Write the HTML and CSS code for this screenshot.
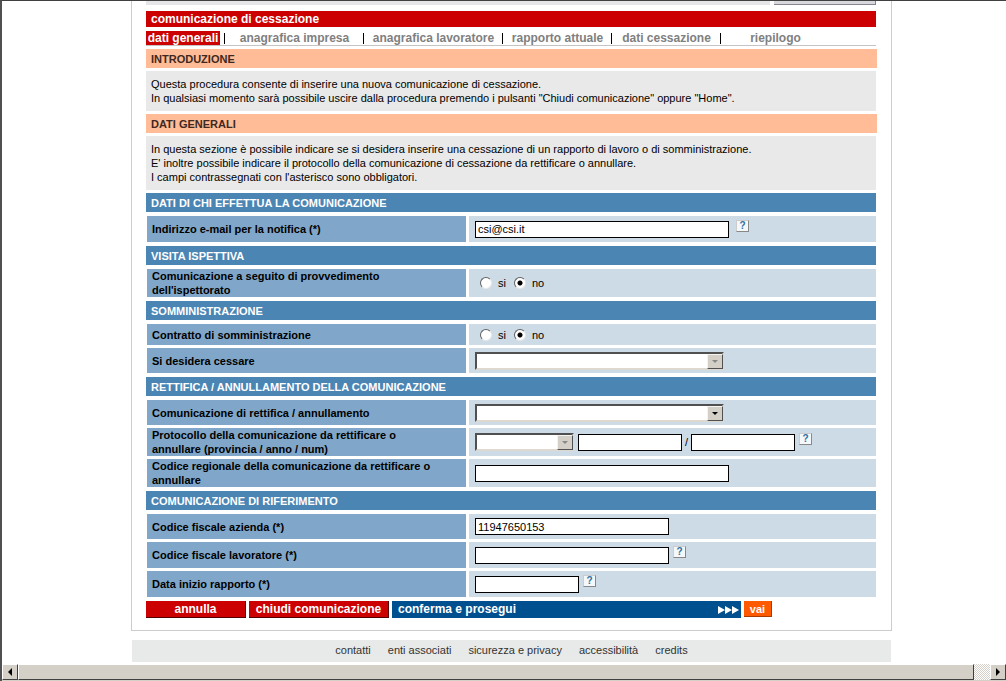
FILE: index.html
```html
<!DOCTYPE html>
<html lang="it">
<head>
<meta charset="utf-8">
<title>Comunicazione di cessazione</title>
<link rel="stylesheet" href="styles.css">
</head>
<body>
<div class="viewport">
  <main class="panel">
    <div class="top-strip"><span class="strip-bar"></span><span class="strip-button"></span></div>
    <h1 class="title">comunicazione di cessazione</h1>
    <nav class="tabs">
      <a class="tab tab-active" href="#">dati generali</a>
      <a class="tab tab-impresa" href="#">anagrafica impresa</a>
      <a class="tab tab-lavoratore" href="#">anagrafica lavoratore</a>
      <a class="tab tab-rapporto" href="#">rapporto attuale</a>
      <a class="tab tab-cessazione" href="#">dati cessazione</a>
      <a class="tab tab-riepilogo" href="#">riepilogo</a>
    </nav>
    <h2 class="heading heading-peach">INTRODUZIONE</h2>
    <p class="intro">Questa procedura consente di inserire una nuova comunicazione di cessazione.<br>In qualsiasi momento sarà possibile uscire dalla procedura premendo i pulsanti "Chiudi comunicazione" oppure "Home".</p>
    <h2 class="heading heading-peach">DATI GENERALI</h2>
    <p class="intro">In questa sezione è possibile indicare se si desidera inserire una cessazione di un rapporto di lavoro o di somministrazione.<br>E' inoltre possibile indicare il protocollo della comunicazione di cessazione da rettificare o annullare.<br>I campi contrassegnati con l'asterisco sono obbligatori.</p>

    <form class="form">
      <h2 class="heading heading-blue">DATI DI CHI EFFETTUA LA COMUNICAZIONE</h2>
      <div class="rows">
        <div class="row row-tall">
          <label class="label" for="email">Indirizzo e-mail per la notifica (*)</label>
          <div class="value"><input class="text text-long" id="email" type="text" value="csi@csi.it"><button class="help help-far" type="button">?</button></div>
        </div>
      </div>

      <h2 class="heading heading-blue">VISITA ISPETTIVA</h2>
      <div class="rows">
        <div class="row">
          <div class="label" id="lab-isp">Comunicazione a seguito di provvedimento dell'ispettorato</div>
          <div class="value radios" role="radiogroup" aria-labelledby="lab-isp">
            <label class="option"><input class="radio" type="radio" name="isp">si</label>
            <label class="option"><input class="radio" type="radio" name="isp" checked>no</label>
          </div>
        </div>
      </div>

      <h2 class="heading heading-blue">SOMMINISTRAZIONE</h2>
      <div class="rows">
        <div class="row row-short">
          <div class="label" id="lab-som">Contratto di somministrazione</div>
          <div class="value radios" role="radiogroup" aria-labelledby="lab-som">
            <label class="option"><input class="radio" type="radio" name="som">si</label>
            <label class="option"><input class="radio" type="radio" name="som" checked>no</label>
          </div>
        </div>
        <div class="row">
          <label class="label" for="cessare">Si desidera cessare</label>
          <div class="value"><span class="drop drop-long drop-off"><select class="select" id="cessare" disabled><option></option></select><span class="arrow"></span></span></div>
        </div>
      </div>

      <h2 class="heading heading-blue">RETTIFICA / ANNULLAMENTO DELLA COMUNICAZIONE</h2>
      <div class="rows">
        <div class="row">
          <label class="label" for="rettifica">Comunicazione di rettifica / annullamento</label>
          <div class="value"><span class="drop drop-long"><select class="select" id="rettifica"><option></option></select><span class="arrow"></span></span></div>
        </div>
        <div class="row">
          <label class="label" for="provincia">Protocollo della comunicazione da rettificare o annullare (provincia / anno / num)</label>
          <div class="value"><span class="drop drop-small drop-off"><select class="select" id="provincia" disabled><option></option></select><span class="arrow"></span></span><input class="text text-short" type="text" aria-label="anno"><span class="slash">/</span><input class="text text-short" type="text" aria-label="num"><button class="help" type="button">?</button></div>
        </div>
        <div class="row">
          <label class="label" for="regionale">Codice regionale della comunicazione da rettificare o annullare</label>
          <div class="value"><input class="text text-long" id="regionale" type="text"></div>
        </div>
      </div>

      <h2 class="heading heading-blue">COMUNICAZIONE DI RIFERIMENTO</h2>
      <div class="rows">
        <div class="row">
          <label class="label" for="azienda">Codice fiscale azienda (*)</label>
          <div class="value"><input class="text text-medium" id="azienda" type="text" value="11947650153"></div>
        </div>
        <div class="row row-tall">
          <label class="label" for="lavoratore">Codice fiscale lavoratore (*)</label>
          <div class="value"><input class="text text-medium" id="lavoratore" type="text"><button class="help" type="button">?</button></div>
        </div>
        <div class="row row-tall">
          <label class="label" for="inizio">Data inizio rapporto (*)</label>
          <div class="value"><input class="text text-short" id="inizio" type="text"><button class="help" type="button">?</button></div>
        </div>
      </div>

      <div class="actions">
        <button class="btn btn-cancel" type="button">annulla</button>
        <button class="btn btn-close" type="button">chiudi comunicazione</button>
        <div class="proceed">conferma e prosegui
          <svg class="chevrons" width="21" height="8" viewBox="0 0 21 8"><path fill="#fff" d="M0 0l7 4-7 4zM7 0l7 4-7 4zM14 0l7 4-7 4z"/></svg>
        </div>
        <button class="btn btn-go" type="button">vai</button>
      </div>
    </form>
  </main>

  <footer class="footer">
    <a class="foot-link" href="#">contatti</a>
    <a class="foot-link" href="#">enti associati</a>
    <a class="foot-link" href="#">sicurezza e privacy</a>
    <a class="foot-link" href="#">accessibilità</a>
    <a class="foot-link" href="#">credits</a>
  </footer>
</div>
<div class="scrollbar">
  <button class="scroll-end" type="button" aria-label="Scorri a sinistra"><svg width="4" height="8" viewBox="0 0 4 8"><path d="M4 0v8L0 4z"/></svg></button>
  <div class="scroll-track"><div class="scroll-thumb"></div></div>
  <button class="scroll-end" type="button" aria-label="Scorri a destra"><svg width="4" height="8" viewBox="0 0 4 8"><path d="M0 0v8l4-4z"/></svg></button>
</div>
</body>
</html>
```

FILE: styles.css
```css
* { box-sizing: border-box; }

body {
  margin: 0;
  min-height: 100vh;
  display: flex;
  flex-direction: column;
  border-top: 1px solid #404040;
  border-left: 2px solid #505050;
  background: #fff;
  color: #000;
  font: 11px/14px "Liberation Sans", Arial, sans-serif;
}

button, input, select { font: inherit; color: inherit; margin: 0; border-radius: 0; }
a { color: inherit; text-decoration: none; }
h1, h2, p { margin: 0; }

.viewport {
  flex: 1;
  display: flex;
  flex-direction: column;
  align-items: center;
  padding-left: 15px;
}

.panel {
  width: 100%;
  max-width: 761px;
  padding: 0 15px 12px 14px;
  border: 1px solid #ccc;
  border-top: 0;
}

.top-strip { display: flex; gap: 4px; height: 4px; margin-bottom: 6px; }
.strip-bar { flex: 1; background: #e6e6e8; }
.strip-button { width: 102px; background: #d8d8dc; border: solid #858590; border-width: 0 1px 1px 0; }

.title {
  padding: 0 5px;
  background: #c00;
  color: #fff;
  font-size: 12px;
  line-height: 16px;
}

.tabs {
  display: flex;
  margin: 4px 0 3px;
  border-bottom: 1px solid #c4c4c4;
  color: #808080;
  font-size: 12px;
  font-weight: bold;
  line-height: 14px;
}
.tab { position: relative; text-align: center; white-space: nowrap; }
.tab:not(:last-child)::after {
  content: "";
  position: absolute;
  right: 0;
  top: 2px;
  width: 1px;
  height: 11px;
  background: #000;
}
.tab-active { width: 79px; color: #fff; background: linear-gradient(to right, #c00 74px, #fff 74px); padding-right: 5px; }
.tab-impresa { width: 139px; }
.tab-lavoratore { width: 139px; }
.tab-rapporto { width: 109px; }
.tab-cessazione { width: 109px; }
.tab-riepilogo { width: 109px; }

.heading { padding: 1px 5px 0; font-size: 11px; line-height: 18px; }
.heading-peach { background: #ffbc96; color: #402820; margin-right: -1px; }
.heading-blue { background: #4b85b3; color: #fff; }

.intro { margin: 3px 0; padding: 6px 5px; background: #e9e9e9; }

.rows { display: grid; gap: 3px; margin: 4px 0 4px 1px; }
.row {
  display: grid;
  grid-template-columns: 319fr 407fr;
  gap: 3px;
  min-height: 25px;
}
.row-tall { min-height: 26px; }
.row-short { min-height: 21px; }
.label {
  display: flex;
  align-items: center;
  padding: 0 20px 0 5px;
  background: #80a7c9;
  font-weight: bold;
}
.value { display: flex; align-items: center; padding: 0 6px; background: #cddbe6; }

.text { height: 17px; padding: 0 2px; border: 1px solid #000; background: #fff; }
.text-long { width: 254px; }
.text-medium { width: 194px; }
.text-short { width: 104px; }
.drop-small + .text-short { margin-left: 4px; }
.slash { width: 9px; text-align: center; }

.help {
  width: 13px;
  height: 12px;
  margin: 0 0 6px 4px;
  padding: 0;
  border: 1px solid #999;
  border-color: #ccc #888 #888 #ccc;
  background: #f4f8fa;
  color: #3070a0;
  font-size: 10px;
  font-weight: bold;
  line-height: 10px;
}
.help-far { margin-left: 7px; }

.radios { padding-left: 11px; gap: 8px; }
.option { display: flex; align-items: center; gap: 6px; }
.radio {
  appearance: none;
  width: 12px;
  height: 12px;
  border: 1px solid #606060;
  border-color: #606060 #e8e8e8 #e8e8e8 #606060;
  border-radius: 50%;
  background: #fff;
}
.radio:checked { background: radial-gradient(circle, #000 2px, #fff 3px); }

.drop { position: relative; display: flex; height: 18px; }
.drop-long { width: 249px; }
.drop-small { width: 99px; }
.select {
  appearance: none;
  width: 100%;
  padding: 0;
  border: 2px solid #505050;
  border-color: #505050 #ddd8d0 #ddd8d0 #505050;
  background: #fff;
  opacity: 1;
}
.arrow {
  position: absolute;
  top: 2px;
  right: 1px;
  bottom: 1px;
  width: 16px;
  border: 1px solid #505050;
  border-color: #f4f4f0 #505050 #505050 #f4f4f0;
  background: #d4d0c8;
  display: grid;
  place-items: center;
  pointer-events: none;
}
.arrow::before { content: ""; border: solid transparent; border-width: 3px 3px 0; border-top-color: #000; }
.drop-off .arrow::before { border-top-color: #888; }

.actions { display: flex; gap: 3px; }
.btn {
  height: 17px;
  padding: 0;
  border: solid #500;
  border-width: 0 1px 1px 0;
  background: #c00;
  color: #fff;
  font-size: 12px;
  font-weight: bold;
  line-height: 16px;
}
.btn-cancel { width: 100px; }
.btn-close { width: 140px; }
.btn-go { width: 28px; height: 16px; border-color: #a83c00; background: #ff5a00; font-size: 11px; line-height: 14px; }
.proceed {
  display: flex;
  align-items: center;
  justify-content: space-between;
  width: 349px;
  padding: 0 2px 0 6px;
  background: #00508f;
  color: #fff;
  font-size: 12px;
  font-weight: bold;
  line-height: 17px;
}

.footer {
  display: flex;
  justify-content: center;
  gap: 17px;
  width: 100%;
  max-width: 759px;
  margin: 9px 0 2px;
  padding: 3px 0 5px;
  background: #e8eae9;
  color: #333;
}

.scrollbar { display: flex; height: 17px; background: #d4d0c8; border-bottom: 1px solid #d4d0c8; }
.scroll-end {
  width: 16px;
  padding: 0;
  border: 1px solid #fff;
  border-color: #fff #404040 #404040 #fff;
  background: #d4d0c8;
  display: grid;
  place-items: center;
}
.scroll-track { flex: 1; background: repeating-conic-gradient(#fff 0 25%, #d4d0c8 0 50%) 0 0 / 2px 2px; padding-right: 16px; }
.scroll-thumb {
  height: 16px;
  border: 1px solid #fff;
  border-color: #fff #404040 #404040 #fff;
  background: #d4d0c8;
}
```
